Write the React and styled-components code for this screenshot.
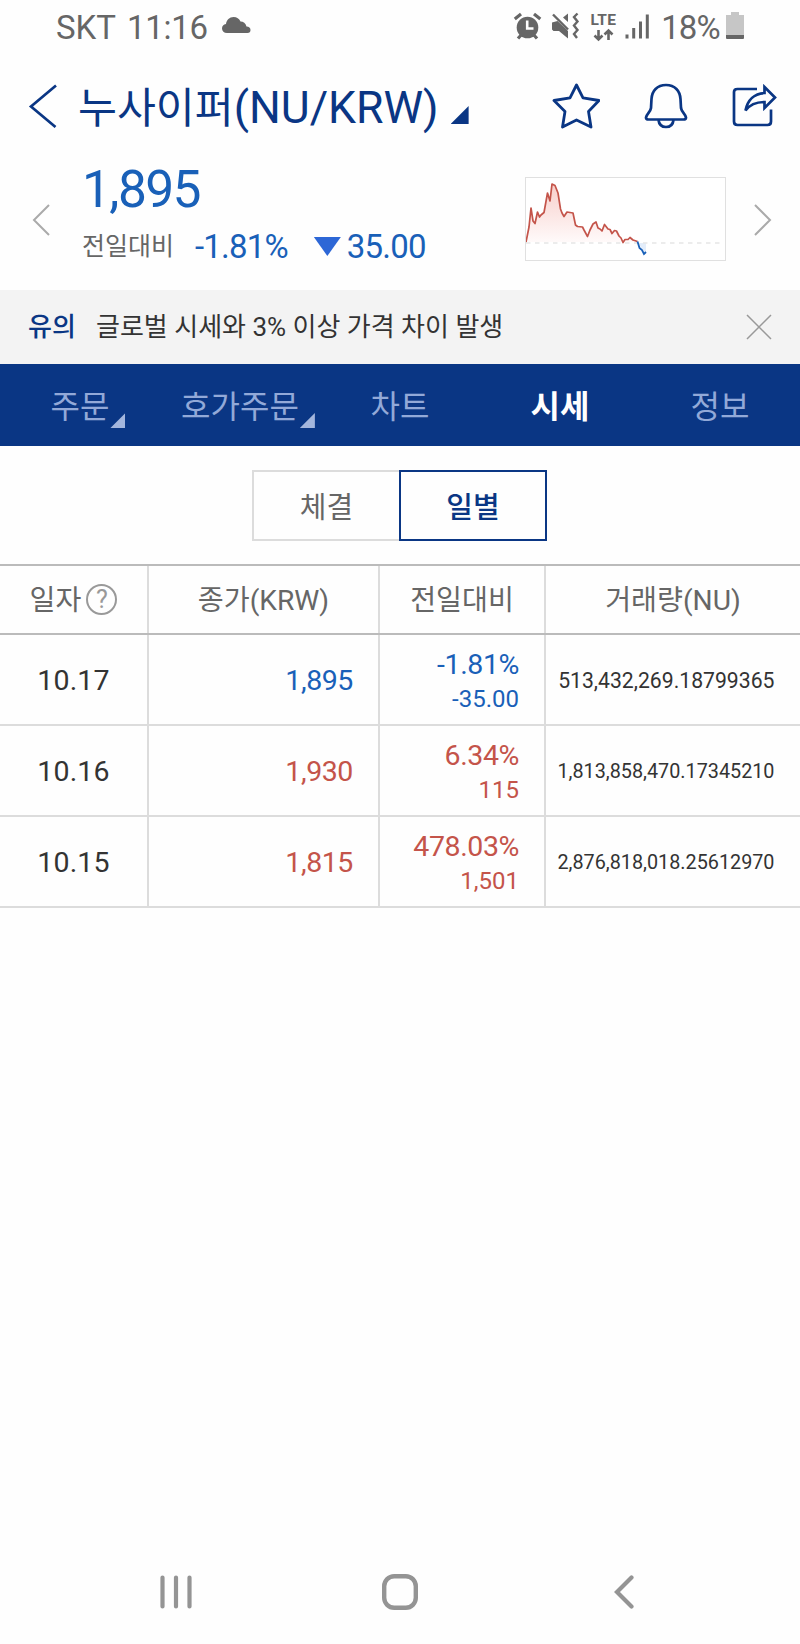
import React, { useState } from 'react';
import styled, { createGlobalStyle } from 'styled-components';


const GlobalStyle = createGlobalStyle`
	:root {
		--navy: #0a3684;
		--blue: #1960b8;
		--red: #c4544a;
		--text1: #333;
		--text2: #666;
		--line: #dcdcdc;
	}
	* {
		box-sizing: border-box;
	}
	body {
		margin: 0;
		background-color: #fefefe;
		font-family: Roboto, "Noto Sans CJK KR", sans-serif;
	}
	button {
		padding: 0;
		border: none;
		background: transparent;
		font-family: inherit;
		color: inherit;
		cursor: pointer;
	}
	svg {
		display: block;
		flex: none;
	}
`
const Screen = styled.div`
	width: 800px;
	height: 1644px;
	display: flex;
	flex-direction: column;
	overflow: hidden;
`
const StatusBar = styled.div`
	height: 56px;
	padding: 0 56px;
	display: flex;
	justify-content: space-between;
	align-items: flex-start;
	color: var(--text2);
`
const StatusGroup = styled.div`
	display: flex;
	align-items: flex-start;
`
const StatusText = styled.span`
	font-size: 33px;
	line-height: 39px;
	margin-top: 8px;
	margin-left: ${props => props.$left || 0}px;
	letter-spacing: ${props => props.$spacing || 0}px;
	white-space: pre;
`
const Header = styled.header`
	height: 100px;
	padding: 0 23px 0 28px;
	display: flex;
	align-items: center;
`
const Title = styled.h1`
	margin: 0 0 0 20px;
	padding-top: 4px;
	font-size: 44.6px;
	line-height: 60px;
	font-weight: 400;
	color: var(--navy);
	white-space: nowrap;
`
const CoinName = styled.span`
	font-size: 42.3px;
`
const Corner = styled.span`
	width: ${props => props.$size}px;
	height: ${props => props.$size}px;
	background-color: ${props => props.$color};
	clip-path: polygon(100% 0, 100% 100%, 0 100%);
`
const TitleCorner = styled(Corner)`
	margin: 18px 0 0 12px;
`
const HeaderActions = styled.div`
	margin-left: auto;
	display: flex;
	align-items: center;
	gap: 44px;
`
const Quote = styled.section`
	height: 134px;
	padding: 0 28px 0 32px;
	display: flex;
	align-items: flex-start;
`
const Arrow = styled.button`
	margin-top: 48px;
`
const QuoteInfo = styled.div`
	margin-left: 32px;
	width: 443px;
`
const Price = styled.div`
	font-size: 51.5px;
	line-height: 60px;
	margin-top: 4px;
	letter-spacing: -1.6px;
	color: var(--blue);
`
const Change = styled.div`
	display: flex;
	align-items: center;
	margin-top: 1px;
	font-size: 33px;
	line-height: 50px;
	letter-spacing: -0.8px;
	color: var(--blue);
`
const ChangeLabel = styled.span`
	width: 113px;
	padding-top: 1px;
	font-size: 25px;
	letter-spacing: 0;
	color: var(--text2);
`
const Down = styled.span`
	width: 27px;
	height: 19px;
	margin: 0 6px 0 26px;
	background-color: #2d67d6;
	clip-path: polygon(0 0, 100% 0, 50% 100%);
`
const ChartBox = styled.div`
	width: 201px;
	height: 84px;
	margin-top: 21px;
	margin-right: auto;
	background-color: #fff;
	border: 1px solid #e0e0e0;
`
const Notice = styled.div`
	height: 74px;
	padding: 0 28px;
	display: flex;
	align-items: center;
	background-color: #f3f3f3;
	font-size: 26px;
	line-height: 36px;
	color: var(--text1);
	white-space: nowrap;
`
const NoticeTag = styled.strong`
	width: 68px;
	font-weight: 500;
	color: var(--navy);
`
const NoticeClose = styled.button`
	margin-left: auto;
`
const Tabs = styled.nav`
	height: 82px;
	display: flex;
	background-color: #0a3684;
`
const Tab = styled.button`
	flex: 1;
	padding-top: 4px;
	font-size: 32px;
	line-height: 44px;
	font-weight: ${props => props.$active ? 700 : 400};
	color: ${props => props.$active ? '#fff' : '#92a9d8'};
`
const TabLabel = styled.span`
	position: relative;
`
const TabCorner = styled(Corner)`
	position: absolute;
	right: -16px;
	bottom: -2px;
`
const Segments = styled.div`
	height: 118px;
	padding: 24px 1px 0 0;
	display: flex;
	justify-content: center;
`
const Segment = styled.button`
	width: 148px;
	height: 71px;
	padding-top: 4px;
	border: 2px solid ${props => props.$active ? 'var(--navy)' : 'var(--line)'};
	font-size: 29px;
	line-height: 40px;
	font-weight: ${props => props.$active ? 500 : 400};
	color: ${props => props.$active ? 'var(--navy)' : 'var(--text2)'};

	&:first-child {
		width: 147px;
		border-right: none;
	}
`
const Table = styled.div`
	border-top: 2px solid #bbb;
`
const Row = styled.div`
	display: grid;
	grid-template-columns: 149px 231px 166px 254px;
	height: 91px;
	border-bottom: 2px solid var(--line);
`
const HeadRow = styled(Row)`
	height: 69px;
	border-bottom: 2px solid #bbb;
`
const HeadCell = styled.div`
	display: flex;
	align-items: center;
	justify-content: center;
	font-size: 28.2px;
	line-height: 40px;
	color: var(--text2);
	white-space: nowrap;

	& > span:first-child {
		padding-top: 3px;
	}

	&:not(:last-child) {
		border-right: 2px solid var(--line);
	}
`
const Cell = styled.div`
	display: flex;
	flex-direction: column;
	justify-content: center;
	align-items: ${props => props.$center ? 'center' : 'flex-end'};
	padding-top: ${props => props.$top || 2}px;
	padding-right: ${props => props.$pad || 0}px;
	font-size: 28.5px;
	line-height: 35px;
	letter-spacing: ${props => props.$center ? 0.2 : -0.4}px;
	color: ${props => props.$color || 'var(--text1)'};

	&:not(:last-child) {
		border-right: 2px solid var(--line);
	}
`
const Diff = styled.span`
	font-size: 24px;
	letter-spacing: 0;
`
const Volume = styled.span`
	font-size: ${props => props.$long ? 19.8 : 21.2}px;
	letter-spacing: 0;
`
const Help = styled.span`
	width: 31px;
	height: 31px;
	margin-left: 5px;
	display: flex;
	align-items: center;
	justify-content: center;
	border: 2px solid #999;
	border-radius: 50%;
	font-size: 25px;
	line-height: 28px;
	color: #999;
`
const SystemNav = styled.div`
	height: 105px;
	margin-top: auto;
	padding: 0 166px 0 160px;
	display: grid;
	grid-template-columns: 222px 1fr 20px;
	align-items: center;
`

const CloudIcon = () => (
	<svg width="29" height="17" viewBox="0 0 29 17" style={{ margin: '17px 0 0 14px' }}>
		<path d="M5 16C2 16 0 14 0 11.500C0 9 1.500 7.500 4 7C4.500 3 7.500 0 11.500 0C15 0 17 1.500 18.500 4.500C21.500 4.500 23.500 6 24.500 9.500C27 9.500 28.500 11 28.500 13C28.500 15 27.500 16 25.500 16Z" fill="#666"/>
	</svg>
)

const StatusIcons = () => (
	<svg width="140" height="44" viewBox="513 0 140 44" fill="none" stroke="#666">
		{/* alarm */}
		<circle cx="527.500" cy="27.500" r="10.800" fill="#666" stroke="none"/>
		<path d="M514.800 19L521 14M540.300 19L534 14M518 38.500L522 34M537 38.500L533 34" strokeWidth="3.200"/>
		<path d="M527.200 20.500V28.500H533.500" stroke="#fefefe" strokeWidth="2.600"/>
		{/* muted + vibration */}
		<path d="M552 22.500L557.500 21L568 31V38.500L559 31H553.500L552 29.500ZM563 17.500L568 13.500V22Z" fill="#666" stroke="none"/>
		<path d="M553 14.500L568 29.500" strokeWidth="2.400"/>
		<path d="M577.500 13.500L574 17L577.500 21.500L574 25.500L577.500 30L574 34L577 38" strokeWidth="2.400"/>
		{/* data arrows */}
		<path d="M598.500 30V39M594.500 35.500L598.500 39.500L602.500 35.500M608.500 40V31M604.500 34.500L608.500 30.500L612.500 34.500" strokeWidth="2.600"/>
		{/* signal */}
		<path d="M627 34.500V38.500M633.700 28V38.500M640.500 21.500V38.500M647.300 14.500V38.500" strokeWidth="3"/>
		<text x="590.500" y="25" fontFamily="Roboto" fontSize="15.500" fontWeight="700" letterSpacing="0.200" fill="#666" stroke="none">LTE</text>
	</svg>
)

const BatteryIcon = () => (
	<svg width="18" height="28" viewBox="0 0 18 28" style={{ marginTop: 12, marginLeft: 6 }}>
		<path d="M5 0H13V3H18V23H0V3H5Z" fill="#c6c6c6"/>
		<path d="M0 23H18V26Q18 27 17 27H1Q0 27 0 26Z" fill="#666"/>
	</svg>
)

const BackIcon = () => (
	<svg width="30" height="44" viewBox="0 0 30 44" fill="none" stroke="#0a3684" strokeWidth="2.700">
		<path d="M28 1.500L3 22.500L27.500 43"/>
	</svg>
)

const StarIcon = () => (
	<svg width="48" height="46" viewBox="0 0 48 46" fill="none" stroke="#0a3684" strokeWidth="2.800" strokeLinejoin="round">
		<path d="M24.500 2L31 14.800L47 17.500L36.500 28.500L39 44L24.500 37L10.500 44L13 28.500L2 17.500L18 14.800Z"/>
	</svg>
)

const BellIcon = () => (
	<svg width="44" height="46" viewBox="0 0 44 46" fill="none" stroke="#0a3684" strokeWidth="2.700" strokeLinejoin="round">
		<path d="M22 2C13 2 8 8 7.500 16L7 25C6.500 29 2.500 31 2 34.500C2 36 3 36.500 4.500 36.500H39.500C41 36.500 42 36 42 34.500C41.500 31 37.500 29 37 25L36.500 16C36 8 31 2 22 2Z"/>
		<path d="M14.500 37C15 41.500 18 44 22 44S29 41.500 29.500 37"/>
	</svg>
)

const ShareIcon = () => (
	<svg width="45" height="44" viewBox="0 0 45 44" fill="none" stroke="#0a3684" strokeWidth="2.700">
		<path d="M25 5H5.500Q2 5 2 8V37.500Q2 41 5.500 41H35.500Q39 41 39 37.500V25.500"/>
		<path d="M32.500 3L43 13.500L32.500 24V18C23.500 18 18 20.500 13.500 26.500C15.500 16 22.500 9.500 32.500 9Z"/>
	</svg>
)

const Chart = () => (
	<svg width="199" height="82" viewBox="1 1 199 82" fill="none">
		<defs>
			<linearGradient id="rise" x1="0" y1="0" x2="0" y2="1">
				<stop offset="0" stopColor="#f8cfcb"/>
				<stop offset="1" stopColor="#fffafa"/>
			</linearGradient>
		</defs>
		<path d="M1 65L4 50L6 31L8 44L10 46.500L12.500 35L14.500 40L19 35.500L22.500 16L25 24L27 7L30 8.500L33 16L35.500 32L39 39L42 35L48 36L50.500 48L57.500 50L62.500 59L68 47L71 45L73 51L77 54L79.500 47.500L87 56L91 54L98 65.500L105 60.500L113 65Z" fill="url(#rise)"/>
		<path d="M113 66L121 77V66Z" fill="#e3edfa"/>
		<path d="M1 66H197" stroke="#e6e6e6" strokeWidth="1.300" strokeDasharray="4.500 4.500"/>
		<path d="M1 65L4 50L6 31L8 44L10 46.500L12.500 35L14.500 40L16 38L19 35.500L22.500 16L25 24L27 7L30 8.500L33 16L35.500 32L37 36L39 39.500L42 35L48 36L50.500 48L52.500 49.500L57.500 50L59 53L62.500 59.500L65 53L68 47L71 45L73 51L75 52L77 54L79.500 47.500L83 52L85 52.500L87 56.500L89.500 53.500L91.500 54L94 59L96 61L98 65.500L100 62.500L103 62.500L105 60.500L108 63L112.500 64.500" stroke="#c4544a" strokeWidth="1.700" strokeLinejoin="round"/>
		<path d="M112.500 64.500L114.500 71L117 73L119 77L121 75" stroke="#1960b8" strokeWidth="1.800"/>
	</svg>
)

const tabs = [
	{ name: '주문', corner: true },
	{ name: '호가주문', corner: true },
	{ name: '차트' },
	{ name: '시세' },
	{ name: '정보' }
]
const segments = ['체결', '일별']
const days = [
	{ date: '10.17', price: '1,895', rate: '-1.81%', diff: '-35.00', volume: '513,432,269.18799365' },
	{ date: '10.16', price: '1,930', rate: '6.34%', diff: '115', volume: '1,813,858,470.17345210' },
	{ date: '10.15', price: '1,815', rate: '478.03%', diff: '1,501', volume: '2,876,818,018.25612970' }
]

const App = () => {
	const [tab, setTab] = useState('시세');
	const [segment, setSegment] = useState('일별');

	return (
		<Screen>
			<GlobalStyle/>

			<StatusBar>
				<StatusGroup>
					<StatusText>SKT</StatusText>
					<StatusText $left={11} $spacing={-0.3}>11:16</StatusText>
					<CloudIcon/>
				</StatusGroup>
				<StatusGroup>
					<StatusIcons/>
					<StatusText $left={8} $spacing={-0.8}>18%</StatusText>
					<BatteryIcon/>
				</StatusGroup>
			</StatusBar>

			<Header>
				<button><BackIcon/></button>
				<Title><CoinName>누사이퍼</CoinName>(NU/KRW)</Title>
				<TitleCorner $size={18} $color="var(--navy)"/>
				<HeaderActions>
					<button><StarIcon/></button>
					<button><BellIcon/></button>
					<button><ShareIcon/></button>
				</HeaderActions>
			</Header>

			<Quote>
				<Arrow>
					<svg width="18" height="32" viewBox="0 0 18 32" fill="none" stroke="#aaa" strokeWidth="2">
						<path d="M17 1L2 16L17 31"/>
					</svg>
				</Arrow>
				<QuoteInfo>
					<Price>1,895</Price>
					<Change>
						<ChangeLabel>전일대비</ChangeLabel>
						-1.81%
						<Down/>
						35.00
					</Change>
				</QuoteInfo>
				<ChartBox><Chart/></ChartBox>
				<Arrow>
					<svg width="18" height="32" viewBox="0 0 18 32" fill="none" stroke="#aaa" strokeWidth="2">
						<path d="M1 1L16 16L1 31"/>
					</svg>
				</Arrow>
			</Quote>

			<Notice>
				<NoticeTag>유의</NoticeTag>
				글로벌 시세와 3% 이상 가격 차이 발생
				<NoticeClose>
					<svg width="26" height="26" viewBox="0 0 26 26" stroke="#999" strokeWidth="1.500">
						<path d="M1 1L25 25M25 1L1 25"/>
					</svg>
				</NoticeClose>
			</Notice>

			<Tabs>
				{tabs.map(({ name, corner }) => (
					<Tab key={name} $active={tab === name} onClick={() => setTab(name)}>
						<TabLabel>
							{name}
							{corner && <TabCorner $size={15} $color="#a3b6dd"/>}
						</TabLabel>
					</Tab>
				))}
			</Tabs>

			<Segments>
				{segments.map(name => (
					<Segment key={name} $active={segment === name} onClick={() => setSegment(name)}>
						{name}
					</Segment>
				))}
			</Segments>

			<Table>
				<HeadRow>
					<HeadCell><span>일자</span><Help>?</Help></HeadCell>
					<HeadCell><span>종가(KRW)</span></HeadCell>
					<HeadCell><span>전일대비</span></HeadCell>
					<HeadCell><span>거래량(NU)</span></HeadCell>
				</HeadRow>
				{days.map(({ date, price, rate, diff, volume }) => {
					const color = rate.startsWith('-') ? 'var(--blue)' : 'var(--red)';

					return (
						<Row key={date}>
							<Cell $center>{date}</Cell>
							<Cell $pad={25} $color={color}>{price}</Cell>
							<Cell $pad={25} $top={5} $color={color}>
								{rate}
								<Diff>{diff}</Diff>
							</Cell>
							<Cell $pad={25.5}>
								<Volume $long={volume.length > 20}>{volume}</Volume>
							</Cell>
						</Row>
					)
				})}
			</Table>

			<SystemNav>
				<svg width="32" height="34" viewBox="0 0 32 34" stroke="#949494" strokeWidth="4.200" strokeLinecap="round">
					<path d="M2.500 2.500V31.500M16 2.500V31.500M29.500 2.500V31.500"/>
				</svg>
				<svg width="36" height="36" viewBox="0 0 36 36" fill="none" stroke="#949494" strokeWidth="4.400">
					<rect x="2.200" y="2.200" width="31.600" height="31.600" rx="10"/>
				</svg>
				<svg width="20" height="34" viewBox="0 0 20 34" fill="none" stroke="#949494" strokeWidth="4.200" strokeLinecap="round">
					<path d="M17.500 2.500L3 17L17.500 31.500"/>
				</svg>
			</SystemNav>
		</Screen>
	)
}
export default App;
